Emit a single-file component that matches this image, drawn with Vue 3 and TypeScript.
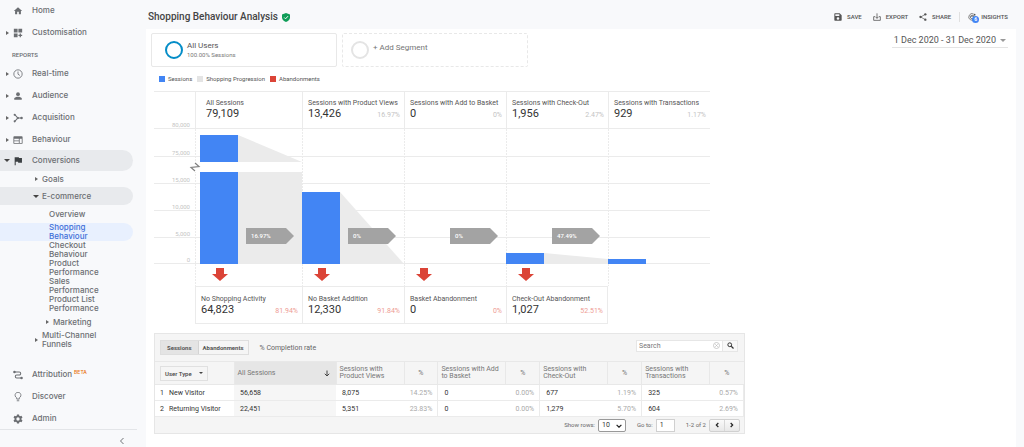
<script setup lang="ts">
import { ref } from 'vue'

interface Stage {
  title: string
  value: string
  share?: string
}

interface Row {
  name: string
  total: string
  cells: string[]
}

const reportItems = ['Real-time', 'Audience', 'Acquisition', 'Behaviour']
const shopReports = [
  'Overview',
  'Shopping Behaviour',
  'Checkout Behaviour',
  'Product Performance',
  'Sales Performance',
  'Product List Performance',
]
const activeReport = ref('Shopping Behaviour')

const stages: Stage[] = [
  { title: 'All Sessions', value: '79,109' },
  { title: 'Sessions with Product Views', value: '13,426', share: '16.97%' },
  { title: 'Sessions with Add to Basket', value: '0', share: '0%' },
  { title: 'Sessions with Check-Out', value: '1,956', share: '2.47%' },
  { title: 'Sessions with Transactions', value: '929', share: '1.17%' },
]

const exits: Stage[] = [
  { title: 'No Shopping Activity', value: '64,823', share: '81.94%' },
  { title: 'No Basket Addition', value: '12,330', share: '91.84%' },
  { title: 'Basket Abandonment', value: '0', share: '0%' },
  { title: 'Check-Out Abandonment', value: '1,027', share: '52.51%' },
]

const ticks = [
  { y: 27, label: '75,000' },
  { y: 54, label: '15,000' },
  { y: 81, label: '10,000' },
  { y: 108, label: '5,000' },
  { y: 134, label: '0' },
]
const dividers = [41, 148, 250, 352, 454]
const tags = [
  { x: 92, label: '16.97%' },
  { x: 194, label: '0%' },
  { x: 296, label: '0%' },
  { x: 398, label: '47.49%' },
]
const arrows = [66, 168, 270, 372]

const metrics = [
  ['Sessions with', 'Product Views'],
  ['Sessions with Add', 'to Basket'],
  ['Sessions with', 'Check-Out'],
  ['Sessions with', 'Transactions'],
]
const rows: Row[] = [
  { name: 'New Visitor', total: '56,658', cells: ['8,075', '14.25%', '0', '0.00%', '677', '1.19%', '325', '0.57%'] },
  { name: 'Returning Visitor', total: '22,451', cells: ['5,351', '23.83%', '0', '0.00%', '1,279', '5.70%', '604', '2.69%'] },
]

const mode = ref('Sessions')
const query = ref('')
const pageSize = ref('10')
const pageNumber = ref('1')
</script>

<template>
  <div class="app">
    <nav class="side" aria-label="Reports">
      <a class="item" href="#home">
        <span class="caret"></span>
        <svg class="icon" viewBox="0 0 24 24"><path d="M10 20v-6h4v6h5v-8h3L12 3 2 12h3v8z" /></svg>
        Home
      </a>
      <a class="item" href="#customisation">
        <span class="caret right"></span>
        <svg class="icon" viewBox="0 0 24 24"><path d="M2 2h9v9H2zM13 2h9v9h-9zM2 13h9v9H2zM16 13h3v3h3v3h-3v3h-3v-3h-3v-3h3z" /></svg>
        Customisation
      </a>
      <h2 class="section">REPORTS</h2>
      <div class="reports">
        <a v-for="name in reportItems" :key="name" class="item" :href="'#' + name">
          <span class="caret right"></span>
          <svg v-if="name === 'Real-time'" class="icon" viewBox="0 0 24 24">
            <circle cx="12" cy="12" r="10" fill="none" stroke="currentColor" stroke-width="2" />
            <path d="M12 6v6.500l4.500 3" fill="none" stroke="currentColor" stroke-width="2" />
          </svg>
          <svg v-else-if="name === 'Audience'" class="icon" viewBox="0 0 24 24">
            <circle cx="12" cy="7.500" r="4.500" />
            <path d="M3 21v-3c0-3 6-4.500 9-4.500s9 1.500 9 4.500v3z" />
          </svg>
          <svg v-else-if="name === 'Acquisition'" class="icon" viewBox="0 0 24 24">
            <path d="M4 4l6 6v4l-6 6M10 12h10" fill="none" stroke="currentColor" stroke-width="2.500" />
            <circle cx="4" cy="4" r="2.500" />
            <circle cx="4" cy="20" r="2.500" />
            <circle cx="12" cy="12" r="2.500" />
            <circle cx="20.500" cy="12" r="3" />
          </svg>
          <svg v-else class="icon" viewBox="0 0 24 24">
            <path fill-rule="evenodd" d="M3 3h18q2 0 2 2v14q0 2-2 2H3q-2 0-2-2V5q0-2 2-2zM3 9v4h11V9zM3 15v4h11v-4zM16 9v10h5V9z" />
          </svg>
          {{ name }}
        </a>
      </div>
      <a class="item open" href="#conversions">
        <span class="caret down"></span>
        <svg class="icon dark" viewBox="0 0 24 24"><path d="M14.400 5L14 3H4v19h2.500v-8h5.500l.500 2h9V5z" /></svg>
        Conversions
      </a>
      <a class="sub" href="#goals"><span class="caret right"></span>Goals</a>
      <a class="sub open" href="#ecommerce"><span class="caret down"></span>E-commerce</a>
      <a
        v-for="name in shopReports"
        :key="name"
        class="leaf"
        :class="{ active: name === activeReport, first: name === 'Overview' }"
        href="#report"
        @click.prevent="activeReport = name"
      ><span>{{ name }}</span></a>
      <a class="sub deep" href="#marketing"><span class="caret right"></span>Marketing</a>
      <a class="sub tall" href="#channels"><span class="caret right"></span><span class="wrap">Multi-Channel Funnels</span></a>
      <div class="tools">
        <a class="item" href="#attribution">
          <span class="caret"></span>
          <svg class="icon" viewBox="0 0 24 24">
            <path d="M4 5h11a3.500 3.500 0 0 1 0 7H9a3.500 3.500 0 0 0 0 7h11" fill="none" stroke="currentColor" stroke-width="2.500" />
            <circle cx="3.500" cy="5" r="3" />
            <circle cx="20.500" cy="19" r="3" />
          </svg>
          Attribution<sup>BETA</sup>
        </a>
        <a class="item" href="#discover">
          <span class="caret"></span>
          <svg class="icon" viewBox="0 0 24 24">
            <path d="M9 17v-3a7 7 0 1 1 6 0v3zM9 21h6" fill="none" stroke="currentColor" stroke-width="2" />
          </svg>
          Discover
        </a>
        <a class="item" href="#admin">
          <span class="caret"></span>
          <svg class="icon" viewBox="0 0 24 24">
            <path fill-rule="evenodd" d="M9.500 1h5l.600 3.300 2 1.200 3.200-1.200 2.500 4.300-2.600 2.200v2.400l2.600 2.200-2.500 4.300-3.200-1.200-2 1.200-.600 3.300h-5l-.600-3.300-2-1.200-3.200 1.200-2.500-4.300 2.600-2.200v-2.400L1.200 8.600l2.500-4.300 3.200 1.200 2-1.200zM12 8a4 4 0 1 0 0 8 4 4 0 0 0 0-8z" />
          </svg>
          Admin
        </a>
      </div>
      <button class="collapse" type="button" aria-label="Collapse menu">
        <svg viewBox="0 0 8 10"><path d="M6 1L2 5l4 4" fill="none" stroke="currentColor" stroke-width="1.300" /></svg>
      </button>
    </nav>

    <main class="main">
      <header class="top">
        <h1>Shopping Behaviour Analysis</h1>
        <svg class="shield" viewBox="0 0 18 20">
          <path d="M9 0l9 3.500V10c0 5-4 8.500-9 10-5-1.500-9-5-9-10V3.500z" fill="#0f9d58" />
          <path d="M5 10l3 3 5.500-6" fill="none" stroke="#fff" stroke-width="2.200" />
        </svg>
        <div class="actions">
          <button type="button">
            <svg viewBox="0 0 24 24"><path fill-rule="evenodd" d="M3 1h14l6 6v14q0 2-2 2H3q-2 0-2-2V3q0-2 2-2zM4 4v5h12V4zM12 12.500a4 4 0 1 0 0 8 4 4 0 0 0 0-8z" /></svg>SAVE
          </button>
          <button type="button">
            <svg viewBox="0 0 24 24"><path d="M6 11H2v11h20V11h-4M12 1v15M7 11l5 5 5-5" fill="none" stroke="currentColor" stroke-width="2.400" /></svg>EXPORT
          </button>
          <button type="button">
            <svg viewBox="0 0 24 24"><path d="M19 4L5 12l14 8" fill="none" stroke="currentColor" stroke-width="2" /><circle cx="19" cy="4" r="3.500" /><circle cx="4.500" cy="12" r="3.500" /><circle cx="19" cy="20" r="3.500" /></svg>SHARE
          </button>
          <button class="insights" type="button">
            <span class="glyph">
              <svg viewBox="0 0 24 24">
                <path d="M17 3A10 10 0 1 0 21 17" fill="none" stroke="currentColor" stroke-width="2.200" />
                <path d="M8 13l3-3 2 2 6-6" fill="none" stroke="currentColor" stroke-width="2" />
                <circle cx="12" cy="12" r="5" fill="none" stroke="currentColor" stroke-width="2" />
                <circle cx="20" cy="5" r="2.500" />
              </svg>
              <span class="badge">6</span>
            </span>INSIGHTS
          </button>
        </div>
      </header>

      <section class="panel">
        <div class="segments">
          <button class="segment" type="button">
            <span class="ring"></span>
            <span class="lines"><b>All Users</b><small>100.00% Sessions</small></span>
          </button>
          <button class="segment empty" type="button">
            <span class="ring"></span>
            <span class="add">+ Add Segment</span>
          </button>
          <button class="dates" type="button">1 Dec 2020 - 31 Dec 2020<span class="caret down"></span></button>
        </div>

        <ul class="legend">
          <li><i class="blue"></i>Sessions</li>
          <li><i class="grey"></i>Shopping Progression</li>
          <li><i class="red"></i>Abandonments</li>
        </ul>

        <div class="funnel">
          <div class="stages">
            <div class="axis">80,000</div>
            <div v-for="s in stages" :key="s.title" class="stage">
              <span class="label">{{ s.title }}</span>
              <span class="figures"><b>{{ s.value }}</b><em v-if="s.share">{{ s.share }}</em></span>
            </div>
          </div>
          <svg class="plot" viewBox="0 0 556 157">
            <g class="grid">
              <line v-for="t in ticks" :key="t.y" x1="0" x2="556" :y1="t.y + 0.5" :y2="t.y + 0.5" />
              <line v-for="x in dividers" :key="x" class="dash" :x1="x + 0.5" :x2="x + 0.5" y1="0" y2="157" />
            </g>
            <text v-for="t in ticks" :key="t.label" class="tick" x="36" :y="t.y - 1">{{ t.label }}</text>
            <g fill="#ebebeb">
              <path d="M84 6L148 33H84z" />
              <path d="M84 43H148V135H84z" />
              <path d="M186 63L250 135H186z" />
              <path d="M390 124L454 130V135H390z" />
            </g>
            <path d="M38 33h12v10H38z" fill="#fff" />
            <g fill="#4285f4">
              <rect x="46" y="6" width="38" height="27" />
              <rect x="46" y="43" width="38" height="92" />
              <rect x="148" y="63" width="38" height="72" />
              <rect x="352" y="124" width="38" height="11" />
              <rect x="454" y="130" width="38" height="5" />
            </g>
            <path d="M41 34l4 3.500-8 1 4 3.500" fill="none" stroke="#808080" stroke-width="1.200" />
            <g v-for="t in tags" :key="t.x">
              <path :d="`M${t.x} 99h40l8 8l-8 8h-40z`" fill="#a3a3a3" />
              <text class="rate" :x="t.x + 5" y="109">{{ t.label }}</text>
            </g>
            <path v-for="x in arrows" :key="x" :d="`M${x - 4} 139h8v6h4l-8 7l-8-7h4z`" fill="#db4437" />
          </svg>
          <div class="exits">
            <div v-for="s in exits" :key="s.title" class="stage">
              <span class="label">{{ s.title }}</span>
              <span class="figures"><b>{{ s.value }}</b><em>{{ s.share }}</em></span>
            </div>
          </div>
        </div>

        <div class="report">
          <div class="bar">
            <div class="toggle">
              <button v-for="m in ['Sessions', 'Abandonments']" :key="m" type="button" :class="{ on: m === mode }" @click="mode = m">{{ m }}</button>
            </div>
            <span class="rate-label">% Completion rate</span>
            <form class="search" @submit.prevent>
              <input v-model="query" type="text" placeholder="Search" aria-label="Search" />
              <button class="clear" type="button" aria-label="Clear search" @click="query = ''">
                <svg viewBox="0 0 14 14"><circle cx="7" cy="7" r="6" fill="none" stroke="currentColor" stroke-width="1.500" /><path d="M4.500 4.500l5 5M9.500 4.500l-5 5" stroke="currentColor" stroke-width="1.500" /></svg>
              </button>
              <button class="go" type="submit" aria-label="Search">
                <svg viewBox="0 0 14 14"><circle cx="5.500" cy="5.500" r="3.800" fill="none" stroke="currentColor" stroke-width="2" /><path d="M8.500 8.500l4.500 4.500" stroke="currentColor" stroke-width="2.600" /></svg>
              </button>
            </form>
          </div>
          <table>
            <colgroup>
              <col class="c-name" /><col class="c-total" />
              <template v-for="m in metrics" :key="m[1]"><col class="c-value" /><col class="c-rate" /></template>
            </colgroup>
            <thead>
              <tr>
                <th><button class="type" type="button">User Type<span class="caret down"></span></button></th>
                <th class="sorted">
                  <span class="sort">All Sessions
                    <svg viewBox="0 0 12 14"><path d="M6 1v11M1.500 7.500L6 12l4.500-4.500" fill="none" stroke="currentColor" stroke-width="2" /></svg>
                  </span>
                </th>
                <template v-for="m in metrics" :key="m[1]">
                  <th>{{ m[0] }}<br />{{ m[1] }}</th>
                  <th class="pct">%</th>
                </template>
              </tr>
            </thead>
            <tbody>
              <tr v-for="(r, i) in rows" :key="r.name">
                <td class="name"><span>{{ i + 1 }}</span>{{ r.name }}</td>
                <td class="total">{{ r.total }}</td>
                <td v-for="(c, j) in r.cells" :key="j" :class="{ share: j % 2 === 1 }">{{ c }}</td>
              </tr>
            </tbody>
          </table>
          <div class="pager">
            <label for="rows">Show rows:</label>
            <span class="pick">
              <select id="rows" v-model="pageSize"><option>10</option><option>25</option></select>
              <svg viewBox="0 0 10 6"><path d="M1 1l4 4 4-4" fill="none" stroke="#222" stroke-width="2" /></svg>
            </span>
            <label for="page">Go to:</label>
            <input id="page" v-model="pageNumber" type="text" />
            <span class="range">1-2 of 2</span>
            <span class="steps">
              <button type="button" aria-label="Previous page"><svg viewBox="0 0 6 8"><path d="M5 1L2 4l3 3" fill="none" stroke="currentColor" stroke-width="1.800" /></svg></button>
              <button type="button" aria-label="Next page"><svg viewBox="0 0 6 8"><path d="M1 1l3 3-3 3" fill="none" stroke="currentColor" stroke-width="1.800" /></svg></button>
            </span>
          </div>
        </div>
      </section>
    </main>
  </div>
</template>

<style>
body {
  background: #f8f9fb;
}
</style>

<style scoped>
* {
  box-sizing: border-box;
}
.app {
  display: flex;
  min-height: 100vh;
  font: 7px/8px Roboto, 'Liberation Sans', sans-serif;
  color: #555;
}
button,
input,
select {
  margin: 0;
  padding: 0;
  border: 0;
  background: none;
  font: inherit;
  color: inherit;
}
a {
  color: inherit;
  text-decoration: none;
}
.caret {
  flex: none;
  width: 3px;
}
.caret.right {
  border: solid transparent;
  border-width: 2px 0 2px 3px;
  border-left-color: #666;
}
.caret.down {
  width: 6px;
  border: 3px solid transparent;
  border-width: 3px 3px 0;
  border-top-color: #444;
}

/* navigation */
.side {
  display: flex;
  flex: none;
  flex-direction: column;
  width: 137px;
  font: 500 8px/9px Inter, Roboto, sans-serif;
  color: #6b6e72;
}
.item {
  display: flex;
  align-items: center;
  width: 133px;
  height: 21px;
  margin-bottom: 1px;
  padding-left: 6px;
  border-radius: 0 11px 11px 0;
}
.item .caret.down {
  margin: 0 -1px 0 -2px;
}
.icon {
  flex: none;
  width: 10px;
  height: 10px;
  margin: 0 9px 0 4px;
  fill: currentColor;
}
.icon.dark {
  color: #3c4043;
}
.open {
  background: #e8eaed;
}
.section {
  margin: 0;
  padding: 2px 0 0 12px;
  font: 500 6px/17px Roboto, sans-serif;
}
.item.open,
.reports .item:last-child,
.tools .item:last-child {
  margin-bottom: 0;
}
.sub {
  display: flex;
  align-items: center;
  gap: 4px;
  width: 133px;
  height: 16px;
  padding-left: 35px;
}
.sub.open {
  height: 18px;
  padding-left: 33px;
  gap: 3px;
  border-radius: 0 9px 9px 0;
}
.sub.deep {
  height: 18px;
  padding-left: 46px;
}
.sub.tall {
  height: 18px;
}
.wrap {
  width: 60px;
}
.leaf {
  width: 133px;
  padding-left: 49px;
  border-radius: 0 9px 9px 0;
}
.leaf span {
  display: block;
  width: 54px;
}
.leaf.first {
  line-height: 18px;
}
.leaf.active {
  background: #e8f0fe;
  color: #3f6fd8;
}
.tools {
  margin-top: 15px;
}
sup {
  margin: 0 0 5px 2px;
  font: 500 5px/5px Inter, sans-serif;
  color: #e8710a;
}
.collapse {
  display: flex;
  flex: 1;
  align-items: center;
  justify-content: flex-end;
  padding: 4px 12px 0 0;
  border-top: 1px solid #e3e5e8;
}
.collapse svg {
  width: 6px;
  height: 8px;
}

/* page header */
.main {
  display: flex;
  flex: 1;
  flex-direction: column;
  min-width: 0;
  padding: 0 8px 0 9px;
}
.top {
  display: flex;
  align-items: center;
  height: 29px;
  padding: 5px 8px 0 2px;
}
h1 {
  margin: 0;
  font: 500 10px/12px Roboto, sans-serif;
  color: #444;
}
.shield {
  width: 8px;
  height: 9px;
  margin-left: 4px;
}
.actions {
  display: flex;
  gap: 11px;
  margin-left: auto;
}
.actions button {
  display: flex;
  align-items: center;
  gap: 5px;
  font: 500 6px/10px Roboto, sans-serif;
  color: #555;
}
.actions svg {
  width: 8px;
  height: 8px;
  fill: currentColor;
}
.actions .insights {
  margin-left: -3px;
  padding-left: 8px;
  border-left: 1px solid #e0e0e0;
}
.glyph {
  position: relative;
  display: flex;
}
.badge {
  position: absolute;
  top: 3px;
  left: 4px;
  width: 7px;
  height: 7px;
  border-radius: 50%;
  background: #4285f4;
  color: #fff;
  font: 700 5px/7px Roboto, sans-serif;
  text-align: center;
}
.panel {
  flex: 1;
  padding: 4px 8px 12px;
  background: #fff;
}

/* segments */
.segments {
  display: flex;
  gap: 5px;
  margin-left: -3px;
}
.segment {
  display: flex;
  align-items: center;
  gap: 4px;
  width: 186px;
  height: 34px;
  padding-left: 13px;
  border: 1px solid #e8e8e8;
  border-radius: 2px;
  text-align: left;
}
.segment.empty {
  padding-left: 8px;
  border-style: dashed;
  color: #757575;
}
.ring {
  width: 18px;
  height: 18px;
  border: 2px solid #058dc7;
  border-radius: 50%;
}
.empty .ring {
  border-color: #e4e4e4;
}
.lines b,
.add {
  font: 400 8px/10px Roboto, sans-serif;
}
.lines small {
  display: block;
  font: 400 6px/8px Roboto, sans-serif;
  color: #777;
}
.add {
  padding-bottom: 4px;
}
.dates {
  display: flex;
  align-items: center;
  gap: 4px;
  height: 15px;
  margin-left: auto;
  padding: 0 2px;
  border-bottom: 1px solid #e4e4e4;
  font-size: 9px;
}
.dates .caret.down {
  border-top-color: #999;
}
.legend {
  display: flex;
  gap: 5px;
  margin: 8px 0 8px 5px;
  padding: 0;
  list-style: none;
  font-size: 6px;
}
.legend li {
  display: flex;
  align-items: center;
  gap: 3px;
}
.legend i {
  width: 6px;
  height: 6px;
}
.blue {
  background: #4285f4;
}
.grey {
  background: #e4e4e4;
}
.red {
  background: #db4437;
}

/* funnel chart */
.funnel {
  max-width: 556px;
}
.stages,
.exits {
  display: grid;
  grid-template-columns: 41fr 107fr repeat(4, 102fr);
}
.stages {
  border: solid #ebebeb;
  border-width: 1px 0;
}
.stage {
  display: flex;
  flex-direction: column;
  height: 36px;
  padding: 7px 4px 0 5px;
  border-left: 1px solid #ebebeb;
}
.axis + .stage {
  padding-left: 10px;
}
.axis {
  align-self: end;
  padding-right: 5px;
  color: #c4c4c4;
  font: 6px/7px Roboto, sans-serif;
  text-align: right;
}
.label {
  white-space: nowrap;
}
.figures {
  display: flex;
  align-items: baseline;
  justify-content: space-between;
}
.figures b {
  font: 400 11px/14px Roboto, sans-serif;
  color: #333;
}
.figures em {
  font-style: normal;
  color: #c4c4c4;
}
.plot {
  display: block;
  width: 100%;
}
.grid line {
  stroke: #ebebeb;
}
.grid .dash {
  stroke-dasharray: 2 1;
}
.tick {
  fill: #c4c4c4;
  font-size: 6px;
  text-anchor: end;
}
.rate {
  fill: #fff;
  font-size: 6px;
  font-weight: 500;
}
.exits .stage {
  height: 38px;
  padding-top: 8px;
  border-top: 1px solid #ebebeb;
  border-bottom: 1px solid #ebebeb;
}
.exits .stage:first-child {
  grid-column-start: 2;
}
.exits .stage:last-child {
  border-right: 1px solid #ebebeb;
}
.exits em {
  color: #ee9c94;
}

/* data table */
.report {
  max-width: 591px;
  margin-top: 9px;
  border: 1px solid #e6e6e6;
  background: #f5f5f5;
}
.bar {
  display: flex;
  align-items: center;
  height: 27px;
  padding: 0 6px 0 5px;
}
.toggle {
  display: flex;
  border: 1px solid #dedede;
}
.toggle button {
  height: 13px;
  padding: 0 4px;
  font: 700 6px/13px Roboto, sans-serif;
}
.toggle .on {
  padding: 0 6px;
  background: #e4e4e4;
  border-right: 1px solid #d4d4d4;
}
.rate-label {
  margin-left: 11px;
  color: #666;
}
.search {
  display: flex;
  align-items: center;
  height: 12px;
  margin: 0 0 4px auto;
  border: 1px solid #e6e6e6;
  background: #fff;
}
.search input {
  width: 76px;
  height: 10px;
  padding-left: 2px;
}
.search input::placeholder {
  color: #777;
}
.search button {
  display: flex;
}
.search svg {
  width: 7px;
  height: 7px;
}
.search .clear {
  padding-right: 2px;
  color: #bbb;
}
.search .go {
  padding: 1px 3px 2px 4px;
  border-left: 1px solid #e6e6e6;
  background: #f8f8f8;
  color: #333;
}
table {
  width: 100%;
  border-collapse: collapse;
  table-layout: fixed;
}
.c-name {
  width: 79px;
}
.c-total {
  width: 102px;
}
.c-value {
  width: 68px;
}
th {
  height: 23px;
  padding: 0 0 0 3px;
  border: 1px solid #e8e8e8;
  border-width: 1px 0 1px 1px;
  font: 400 7px/7px Roboto, sans-serif;
  color: #777;
  text-align: left;
}
th:first-child,
td:first-child {
  padding-left: 5px;
  border-left: 0;
}
.type {
  display: flex;
  align-items: center;
  gap: 7px;
  height: 15px;
  padding: 0 4px;
  border: 1px solid #e0e0e0;
  color: #444;
  font: 500 6px/13px Roboto, sans-serif;
}
.type .caret.down {
  width: 4px;
  border-width: 2px 2px 0;
}
.sorted {
  background: #e6e6e6;
}
.sort {
  display: flex;
  align-items: center;
  justify-content: space-between;
  padding-right: 6px;
}
.sort svg {
  width: 6px;
  height: 7px;
  color: #444;
}
th.pct {
  padding: 0;
  text-align: center;
}
td {
  height: 16px;
  padding: 0 0 0 6px;
  border-bottom: 1px solid #ebebeb;
  background: #fff;
  color: #333;
}
td.name span {
  display: inline-block;
  width: 9px;
}
td.total {
  background: #f6f6f6;
}
td.share {
  padding: 0 5px 0 0;
  border-right: 1px solid #ebebeb;
  color: #aaa;
  text-align: right;
}
.pager {
  display: flex;
  align-items: center;
  justify-content: flex-end;
  height: 16px;
  padding-right: 4px;
  font-size: 6px;
  color: #666;
}
.pick {
  position: relative;
  margin: 0 11px 0 3px;
}
.pick select {
  display: block;
  width: 28px;
  height: 13px;
  padding-left: 3px;
  appearance: none;
  border: 1px solid #999;
  border-radius: 2px;
  background: #fff;
  color: #333;
  font-size: 7px;
}
.pick svg {
  position: absolute;
  top: 5px;
  right: 4px;
  width: 6px;
  height: 4px;
  pointer-events: none;
}
.pager input {
  width: 19px;
  height: 13px;
  margin: 0 11px 0 3px;
  padding-left: 3px;
  border: 1px solid #d0d0d0;
  background: #fff;
  color: #333;
  font-size: 7px;
}
.steps {
  display: flex;
  margin-left: 3px;
  border: 1px solid #d0d0d0;
  border-radius: 2px;
  background: linear-gradient(#fafafa, #e8e8e8);
}
.steps button {
  display: flex;
  align-items: center;
  justify-content: center;
  width: 14px;
  height: 11px;
  color: #222;
}
.steps button + button {
  width: 15px;
  border-left: 1px solid #d8d8d8;
}
.steps svg {
  width: 4px;
  height: 6px;
}
</style>
